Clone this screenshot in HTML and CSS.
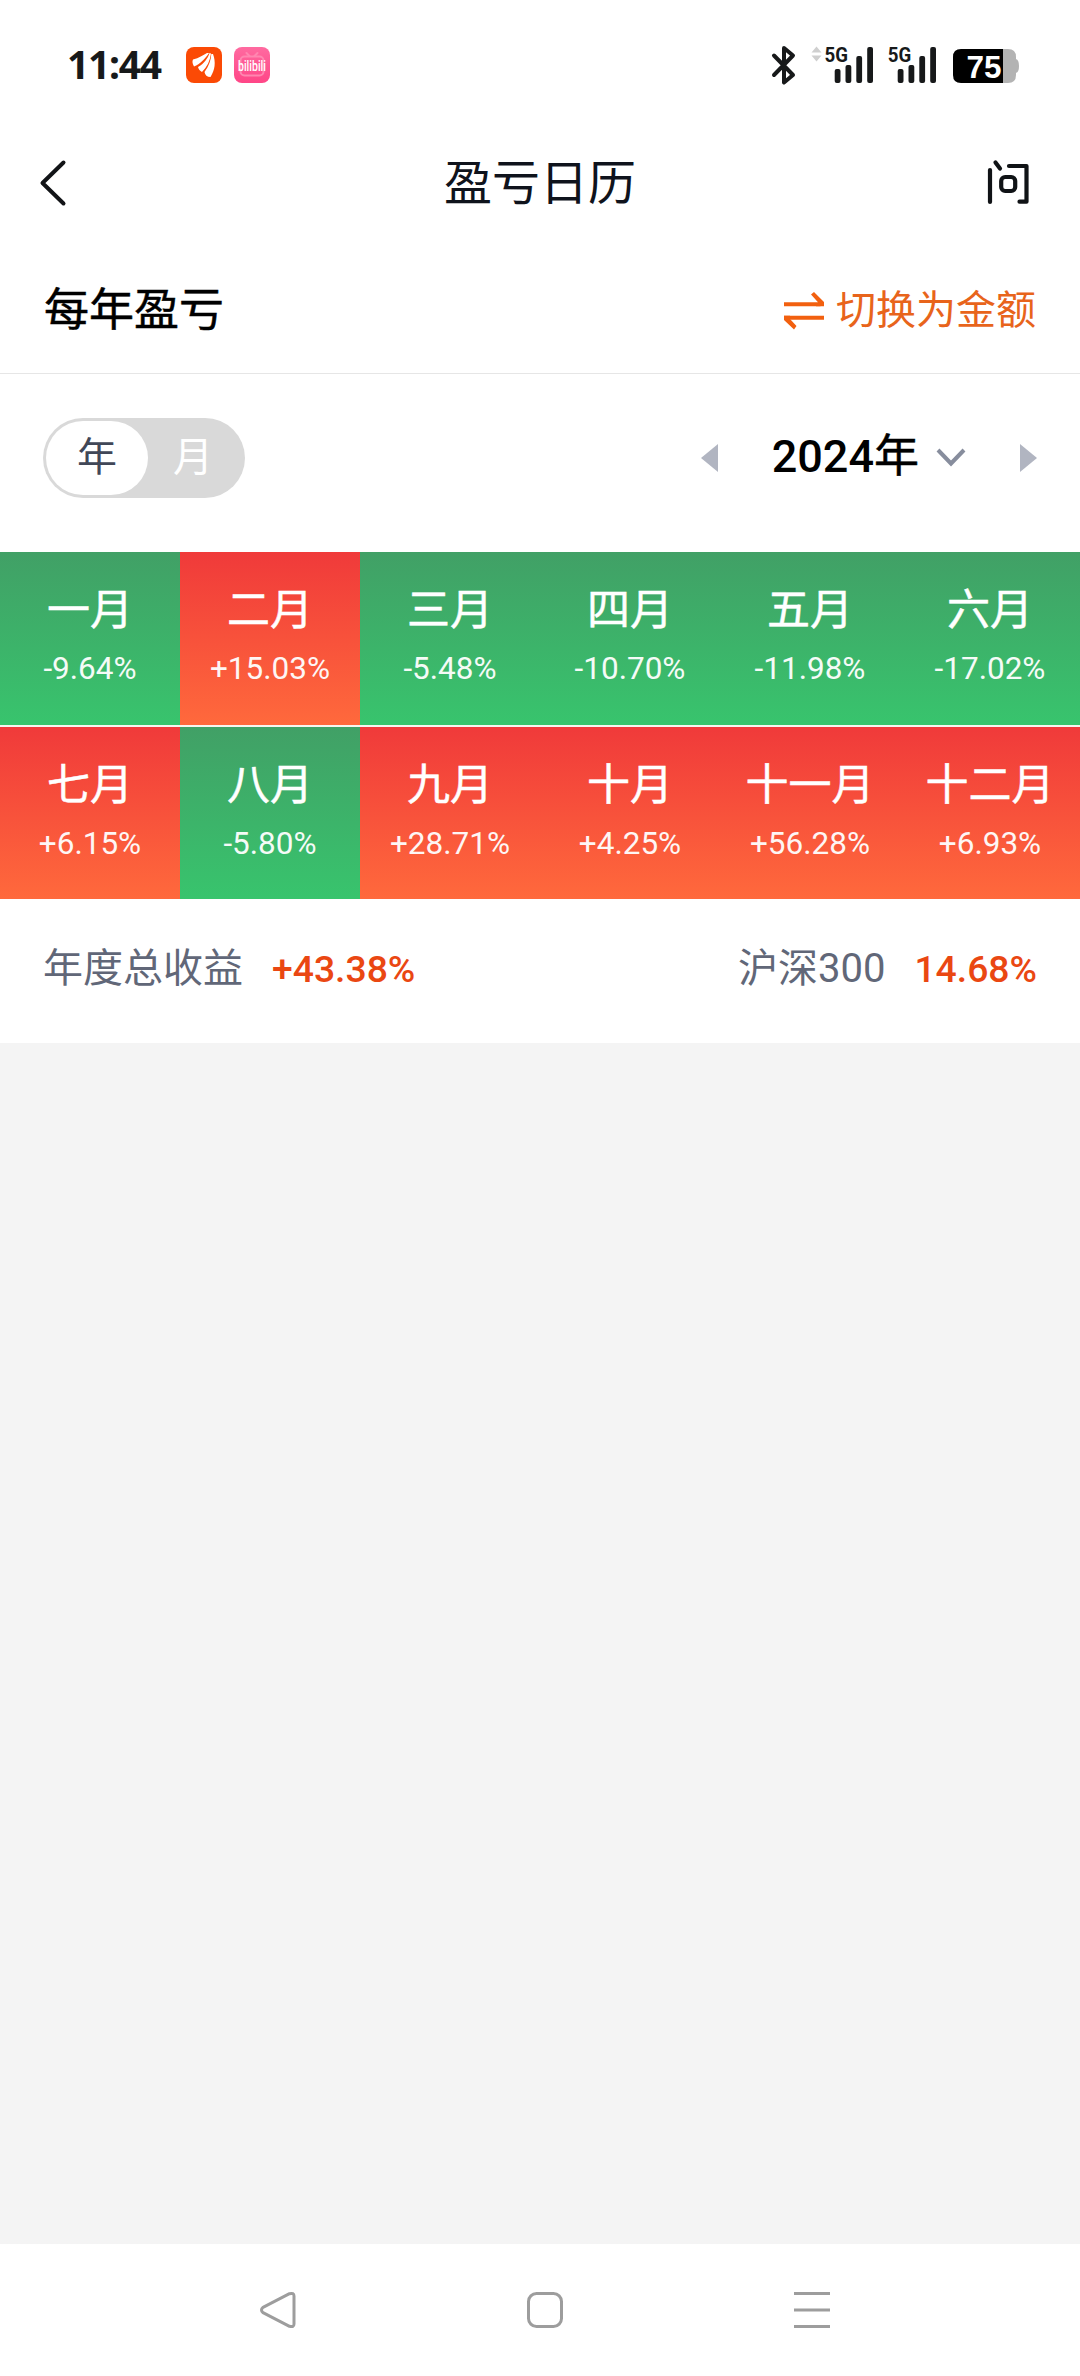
FILE: index.html
```html
<!DOCTYPE html>
<html lang="zh-CN">
<head>
<meta charset="utf-8">
<title>盈亏日历</title>
<link rel="stylesheet" href="styles.css">
</head>
<body>
<div class="screen">
  <header class="status">
    <span class="clock">11:44</span>
    <svg class="app" width="36" height="36" viewBox="0 0 36 36">
      <rect width="36" height="36" rx="8" fill="#fb4a05"/>
      <path fill="#fff" d="M7 12.500C13 11 17 8 21 6L23 6C19 12 14 17 8 19.500C6.500 17 6 14 7 12.500Z"/>
      <path fill="#fff" d="M12 20C18 17 22 11 23.500 6L25 6.500C24 14 21 20 16 25C14 24 12.500 22 12 20Z"/>
      <path fill="#fff" d="M18.500 25C23 19 25 13 25.300 7L27 7C30 15 29 23 24.500 30C21 30 19 28 18.500 25Z"/>
    </svg>
    <svg class="app" width="36" height="36" viewBox="0 0 36 36">
      <defs><linearGradient id="pink" x2="0" y2="1"><stop stop-color="#ff6aa0"/><stop offset="1" stop-color="#ff4687"/></linearGradient></defs>
      <rect width="36" height="36" rx="8" fill="url(#pink)"/>
      <g fill="none" stroke="#ff86b0" stroke-width="2" stroke-linecap="round"><rect x="6.500" y="9.500" width="23" height="19" rx="4"/><path d="M12.500 6l3 3M23.500 6l-3 3"/></g>
      <text x="4" y="24" class="bili" textLength="28" lengthAdjust="spacingAndGlyphs">bilibili</text>
    </svg>
    <svg class="signals" width="250" height="56" viewBox="770 36 250 56">
      <path d="M774 54.500L793 74L784 81.500V47L793 54.500L774 74" fill="none" stroke="#17191a" stroke-width="4" stroke-linecap="round" stroke-linejoin="round"/>
      <path d="M811.500 51.500L816.500 45.500L821.500 51.500ZM811.500 54.500H821.500L816.500 60.500Z" fill="#cfcfcf"/>
      <g fill="#17191a">
        <text x="824.500" y="61" class="net" textLength="23.500" lengthAdjust="spacingAndGlyphs">5G</text>
        <rect x="834.700" y="68" width="5.800" height="14" rx="2"/><rect x="845.500" y="64" width="5.800" height="18" rx="2"/><rect x="856.300" y="55" width="5.800" height="27" rx="2"/><rect x="867.200" y="46" width="5.800" height="36" rx="2"/>
        <text x="887.800" y="61" class="net" textLength="23.500" lengthAdjust="spacingAndGlyphs">5G</text>
        <rect x="897.700" y="68" width="5.800" height="14" rx="2"/><rect x="908.500" y="64" width="5.800" height="18" rx="2"/><rect x="919.300" y="55" width="5.800" height="27" rx="2"/><rect x="930.200" y="46" width="5.800" height="36" rx="2"/>
      </g>
      <path d="M1003 48h5q8 0 8 8v2q3 1 3 7t-3 7v2q0 8-8 8h-5z" fill="#b3b3b3"/>
      <path d="M1003 48h-42q-8 0-8 8v18q0 8 8 8h42z" fill="#000"/>
      <text x="966.500" y="76.500" class="charge" textLength="35" lengthAdjust="spacingAndGlyphs">75</text>
    </svg>
  </header>

  <nav class="titlebar">
    <svg width="30" height="50" viewBox="38 158 30 50"><path d="M63.500 162.500L42.500 183L63.500 203.500" fill="none" stroke="#121417" stroke-width="4" stroke-linecap="round" stroke-linejoin="round"/></svg>
    <h1 class="title">盈亏日历</h1>
    <svg width="44" height="46" viewBox="986 160 44 46">
      <g fill="none" stroke="#101316" stroke-width="4.200" stroke-linecap="round" stroke-linejoin="round"><path d="M990 170V202"/><path d="M995.500 162.500L1000 168.500"/><path d="M1009 166H1026.500V201.700H1019.500"/><rect x="1001.200" y="177" width="14" height="14" rx="4"/></g>
    </svg>
  </nav>

  <section class="section-head">
    <h2 class="heading">每年盈亏</h2>
    <div class="switch">
      <svg width="41" height="40" viewBox="785 290 41 40"><g fill="none" stroke="#f2600f" stroke-width="4"><path d="M785 303.300H821.500"/><path d="M785 316.700H825"/></g><path fill="#f2600f" d="M812 293.500L815 291L825 301V305.300H817L819 301.300ZM785 314.700H791V318L797.500 325L795 328.500L785 319Z"/></svg>
      <span>切换为金额</span>
    </div>
  </section>

  <section class="controls">
    <div class="toggle"><span class="opt on">年</span><span class="opt">月</span></div>
    <div class="year">
      <svg width="17" height="28" viewBox="0 0 17 28"><path d="M17 0V28L0 14Z" fill="#b1b5c1"/></svg>
      <span class="year-text">2024<span class="cjk">年</span></span>
      <svg class="chev" width="30" height="22" viewBox="0 0 30 22"><path d="M2 3L15 16.500L28 3" fill="none" stroke="#878d9d" stroke-width="4"/></svg>
      <svg width="17" height="28" viewBox="0 0 17 28"><path d="M0 0V28L17 14Z" fill="#b1b5c1"/></svg>
    </div>
  </section>

  <section class="months">
    <div class="cell down"><b>一月</b><span>-9.64%</span></div>
    <div class="cell up"><b>二月</b><span>+15.03%</span></div>
    <div class="cell down"><b>三月</b><span>-5.48%</span></div>
    <div class="cell down"><b>四月</b><span>-10.70%</span></div>
    <div class="cell down"><b>五月</b><span>-11.98%</span></div>
    <div class="cell down"><b>六月</b><span>-17.02%</span></div>
    <div class="cell up"><b>七月</b><span>+6.15%</span></div>
    <div class="cell down"><b>八月</b><span>-5.80%</span></div>
    <div class="cell up"><b>九月</b><span>+28.71%</span></div>
    <div class="cell up"><b>十月</b><span>+4.25%</span></div>
    <div class="cell up"><b>十一月</b><span>+56.28%</span></div>
    <div class="cell up"><b>十二月</b><span>+6.93%</span></div>
  </section>

  <section class="summary">
    <div class="stat"><span>年度总收益</span><strong>+43.38%</strong></div>
    <div class="stat"><span>沪深300</span><strong>14.68%</strong></div>
  </section>

  <main class="empty"></main>

  <footer class="navbar">
    <svg width="38" height="38" viewBox="0 0 38 38"><path d="M4 16.300L30.500 2.700Q35 1.500 35 5V33Q35 36.500 30.500 35.300L4 21.700Q1 19 4 16.300Z"/></svg>
    <svg width="38" height="38" viewBox="0 0 38 38"><rect x="2.500" y="2.500" width="33" height="33" rx="8"/></svg>
    <svg width="38" height="38" viewBox="0 0 38 38"><path d="M1 2.500H37M1 19H37M1 35.500H37"/></svg>
  </footer>
</div>
</body>
</html>
```
FILE: styles.css
```css
* { box-sizing: border-box; }
body { margin: 0; background: #fff; font-family: Roboto, "Noto Sans CJK SC", sans-serif; }
svg { display: block; flex: none; overflow: visible; }
h1, h2 { margin: 0; font-weight: 400; }
.screen { width: 1080px; height: 2376px; display: flex; flex-direction: column; background: #fff; }

.status { height: 128px; flex: none; display: flex; align-items: center; padding: 2px 60px 0 67px; }
.clock { width: 119px; padding-bottom: 3px; font: 700 39px/50px "Noto Sans", sans-serif; letter-spacing: -1.3px; color: #17191a; }
.app { margin-right: 12px; }
.signals { margin-left: auto; }
.bili { font: 500 14px Roboto, sans-serif; fill: #fff; }
.net { font: 700 21px Roboto, sans-serif; }
.charge { font: 700 31px "Liberation Sans", sans-serif; fill: #fff; }

.titlebar { height: 110px; flex: none; display: grid; grid-template-columns: 1fr auto 1fr; align-items: center; padding: 0 50px 0 38px; }
.titlebar svg:last-child { justify-self: end; }
.title { padding: 2px 0 0 12px; font-size: 48px; line-height: 60px; color: #0f131c; }

.section-head { height: 136px; flex: none; display: flex; align-items: center; justify-content: space-between; padding: 10px 44px 0; border-bottom: 1px solid #e6e6e6; }
.heading { font-size: 45px; line-height: 60px; color: #000; -webkit-text-stroke: .5px; }
.switch { display: flex; align-items: center; gap: 11px; font-size: 40px; line-height: 50px; color: #e8641b; }

.controls { height: 178px; flex: none; display: flex; align-items: center; justify-content: space-between; padding: 0 43px 10px; }
.toggle { width: 202px; height: 80px; padding: 3px; display: flex; border-radius: 40px; background: #d9d9d9; font-size: 40px; line-height: 73px; color: #fff; }
.opt { flex: 1; text-align: center; padding-right: 4px; }
.on { flex: 0 0 102px; padding: 0; border-radius: 37px; background: #fff; color: #414757; }
.year { display: flex; align-items: center; }
.year-text { margin: -3px 17px 0 54px; font-size: 45px; font-weight: 500; line-height: 60px; color: #000; }
.cjk { font-weight: 400; -webkit-text-stroke: .5px; }
.chev { margin-right: 54px; }

.months { display: grid; flex: none; grid-template: 173px 172px / repeat(6, 180px); row-gap: 2px; background: #f7f5ee; color: #fff; }
.cell { display: flex; flex-direction: column; align-items: center; padding-top: 28px; }
.cell b { font-size: 43px; font-weight: 400; line-height: 60px; -webkit-text-stroke: .5px; }
.cell span { font-size: 31.500px; line-height: 40px; margin-top: 9px; opacity: .95; }
.down { background: linear-gradient(#41a066, #38c46d); }
.up { background: linear-gradient(#f03a3a, #ff693c); }

.summary { height: 144px; flex: none; display: flex; align-items: center; justify-content: space-between; padding: 0 43px 4px; font-size: 40px; line-height: 60px; color: #616778; }
.stat { display: flex; align-items: baseline; gap: 29px; }
.stat strong { font-size: 37.300px; font-weight: 500; color: #ea4712; }

.empty { flex: 1; background: #f4f4f4; }
.navbar { height: 132px; flex: none; display: flex; align-items: center; justify-content: space-between; padding: 0 249px 0 259px; }
.navbar svg { fill: none; stroke: #9d9d9d; stroke-width: 3; stroke-linejoin: round; }
```
